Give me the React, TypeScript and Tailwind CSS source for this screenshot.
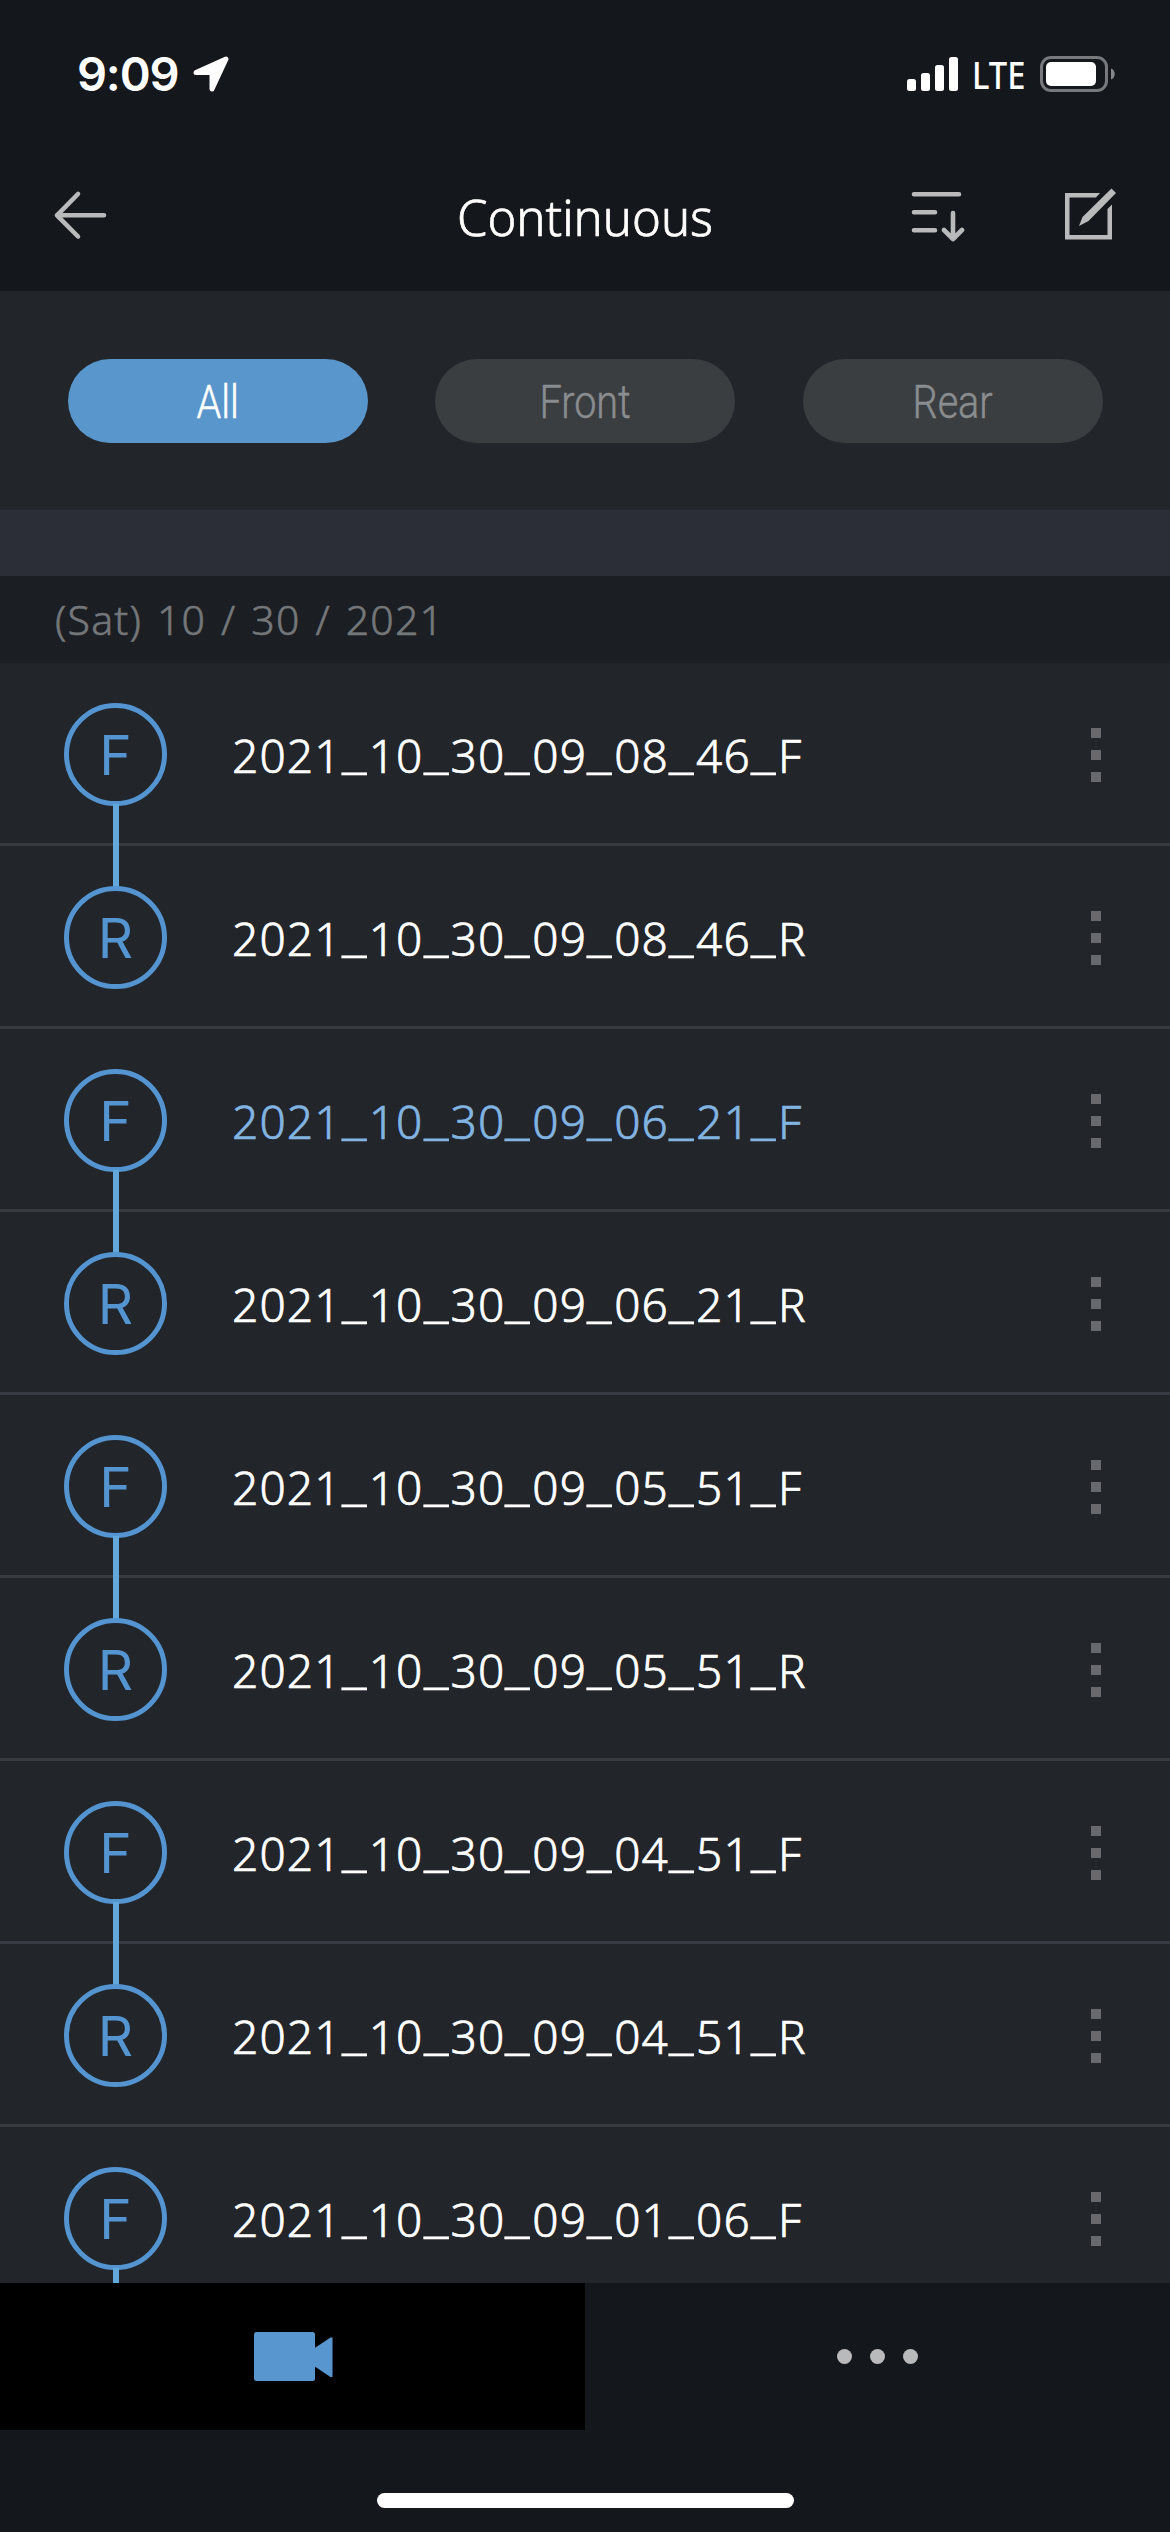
const files = [
  { name: "2021_10_30_09_08_46_F" },
  { name: "2021_10_30_09_08_46_R" },
  { name: "2021_10_30_09_06_21_F", active: true },
  { name: "2021_10_30_09_06_21_R" },
  { name: "2021_10_30_09_05_51_F" },
  { name: "2021_10_30_09_05_51_R" },
  { name: "2021_10_30_09_04_51_F" },
  { name: "2021_10_30_09_04_51_R" },
  { name: "2021_10_30_09_01_06_F" },
];

const filters = ["All", "Front", "Rear"];

const StatusBar = () => (
  <div className="flex h-[150px] items-start justify-between pl-[77px] pr-[55px] pt-[50px] text-white">
    <div className="flex items-center">
      <span className="w-[102px] whitespace-nowrap font-['Inter',sans-serif] text-[47px] font-semibold leading-[48px] tracking-[-1.2px]">9:09</span>
      <svg width="36" height="36" viewBox="0 0 36 36" className="ml-[14px]">
        <path d="M3 16.5 33 3 19 33V16.5Z" fill="white" stroke="white" strokeWidth="5" strokeLinejoin="round" />
      </svg>
    </div>
    <div className="flex items-center pt-[6px]">
      <svg width="51" height="34" viewBox="0 0 51 34" fill="white">
        <rect x="0" y="22" width="9" height="12" rx="2.5" />
        <rect x="14" y="16" width="9" height="18" rx="2.5" />
        <rect x="28" y="8" width="9" height="26" rx="2.5" />
        <rect x="42" y="0" width="9" height="34" rx="2.5" />
      </svg>
      <span className="ml-[14px] w-[56px] origin-left scale-x-[0.86] font-['Noto_Sans',sans-serif] text-[38px] font-medium leading-9">LTE</span>
      <svg width="75" height="36" viewBox="0 0 75 36" className="ml-[12px]">
        <rect x="1.5" y="1.5" width="65" height="33" rx="9.5" fill="none" stroke="#77797c" strokeWidth="3" />
        <rect x="6" y="6" width="50" height="24" rx="5" fill="white" />
        <path d="M71 12.5c5 1.500 5 9.500 0 11Z" fill="#85878a" />
      </svg>
    </div>
  </div>
);

const Header = () => (
  <div className="grid h-[141px] grid-cols-[1fr_auto_1fr] items-start">
    <svg width="54" height="50" viewBox="0 0 54 50" className="ml-[53px] mt-[40px]" fill="none" stroke="#b9babc" strokeWidth="4.6" strokeLinecap="round" strokeLinejoin="round">
      <path d="M25 4 4 25.300 25 46.500M4 25.300H51" />
    </svg>
    <h1 className="mt-[40px] font-['Noto_Sans',sans-serif] text-[49px] font-light leading-[54px] text-white [-webkit-text-stroke:0.7px]">Continuous</h1>
    <div className="flex justify-end gap-[98px] pr-[53px] pt-[38px]">
      <svg width="54" height="54" viewBox="0 0 54 54" fill="none" stroke="#b9babc" strokeWidth="4.6" strokeLinecap="round" strokeLinejoin="round">
        <path d="M3 6.300H48M3 24.300H24M3 42.300H24M42 25V50M33 42l9 9 9-9" />
      </svg>
      <svg width="54" height="54" viewBox="0 0 54 54" fill="#b9babc">
        <path d="M2 5H37l-4 4.500H6.500V47H44.500V21l4.500-4.500V51.500H2Z" />
        <path d="M48.500.500 53 5 25.500 33 16 38 19.500 29Z" />
      </svg>
    </div>
  </div>
);

const FilterTabs = () => (
  <div className="flex h-[219px] items-start justify-between bg-[#22252a] px-[67.500px] pt-[68px]">
    {filters.map((label, i) => (
      <button
        key={label}
        className={`flex h-[84px] w-[300px] items-center justify-center rounded-full pt-[2px] font-['Roboto',sans-serif] text-[46px] font-light [-webkit-text-stroke:0.5px] ${
          i === 0 ? "bg-[#5896cb] text-white" : "bg-[#3a3e41] text-[#8a8d8f]"
        }`}
      >
        <span className="scale-x-[0.86]">{label}</span>
      </button>
    ))}
  </div>
);

const FileName = ({ name, active }: { name: string; active?: boolean }) => (
  <span
    className={`font-['Noto_Sans',sans-serif] text-[46px] font-light leading-[54px] tracking-[1.15px] [-webkit-text-stroke:0.7px] ${
      active ? "text-[#82b4e2]" : "text-white"
    }`}
  >
    {name.split("_").map((part, i) => (
      <span key={i}>
        {i > 0 && <span className="inline-block w-[27px] origin-left scale-x-[1.27] align-[4px] leading-none">_</span>}
        {part}
      </span>
    ))}
  </span>
);

const FileRow = ({ name, active }: { name: string; active?: boolean }) => {
  const camera = name.slice(-1);

  return (
    <div className="flex h-[183px] shrink-0 items-start border-b-[3px] border-[#373a40]">
      <div className="relative ml-[64px] mt-[40px] flex h-[103px] w-[103px] items-center justify-center rounded-full border-[5px] border-[#5494d0] pt-[2px] font-['Inter',sans-serif] text-[55px] leading-none text-[#5494d0]">
        {camera}
        {camera === "F" && <div className="absolute left-[44px] top-[96px] h-[84px] w-[6px] bg-[#63a8da]" />}
      </div>
      <div className="ml-[65px] mt-[65px] flex-1">
        <FileName name={name} active={active} />
      </div>
      <button className="mr-[69px] mt-[65px] flex flex-col gap-[12px]">
        <span className="size-[10px] bg-[#67696c]" />
        <span className="size-[10px] bg-[#67696c]" />
        <span className="size-[10px] bg-[#67696c]" />
      </button>
    </div>
  );
};

const BottomBar = () => (
  <div className="h-[249px] bg-[#14171b]">
    <div className="grid h-[147px] grid-cols-2">
      <button className="flex items-center justify-center bg-black pl-[2px]">
        <svg width="79" height="50" viewBox="0 0 79 50" fill="#5896cf">
          <rect x="0" y="0" width="61" height="49" rx="2.500" />
          <path d="M60 16.500 76.500 5.500H78.500V45H76.500L60 34Z" />
        </svg>
      </button>
      <button className="flex items-center justify-center gap-[18px]">
        <span className="size-[15px] rounded-full bg-[#b9babc]" />
        <span className="size-[15px] rounded-full bg-[#b9babc]" />
        <span className="size-[15px] rounded-full bg-[#b9babc]" />
      </button>
    </div>
    <div className="mx-auto mt-[63px] h-[15px] w-[417px] rounded-full bg-white" />
  </div>
);

const App = () => {
  return (
    <div className="flex h-[2532px] w-[1170px] flex-col overflow-hidden bg-[#14171b]">
      <StatusBar />
      <Header />
      <FilterTabs />
      <div className="h-[66px] bg-[#2b2e37]" />
      <div className="h-[87px] bg-[#1b1e22] pl-[55px] pt-[16px] font-['Noto_Sans',sans-serif] text-[41px] font-light leading-[54px] tracking-[1.2px] text-[#74777a] [-webkit-text-stroke:0.6px] [word-spacing:3px]">
        (Sat) 10 / 30 / 2021
      </div>
      <div className="flex h-[1620px] flex-col overflow-hidden bg-[#22252a]">
        {files.map((file) => (
          <FileRow key={file.name} {...file} />
        ))}
      </div>
      <BottomBar />
    </div>
  );
};

export default App;
